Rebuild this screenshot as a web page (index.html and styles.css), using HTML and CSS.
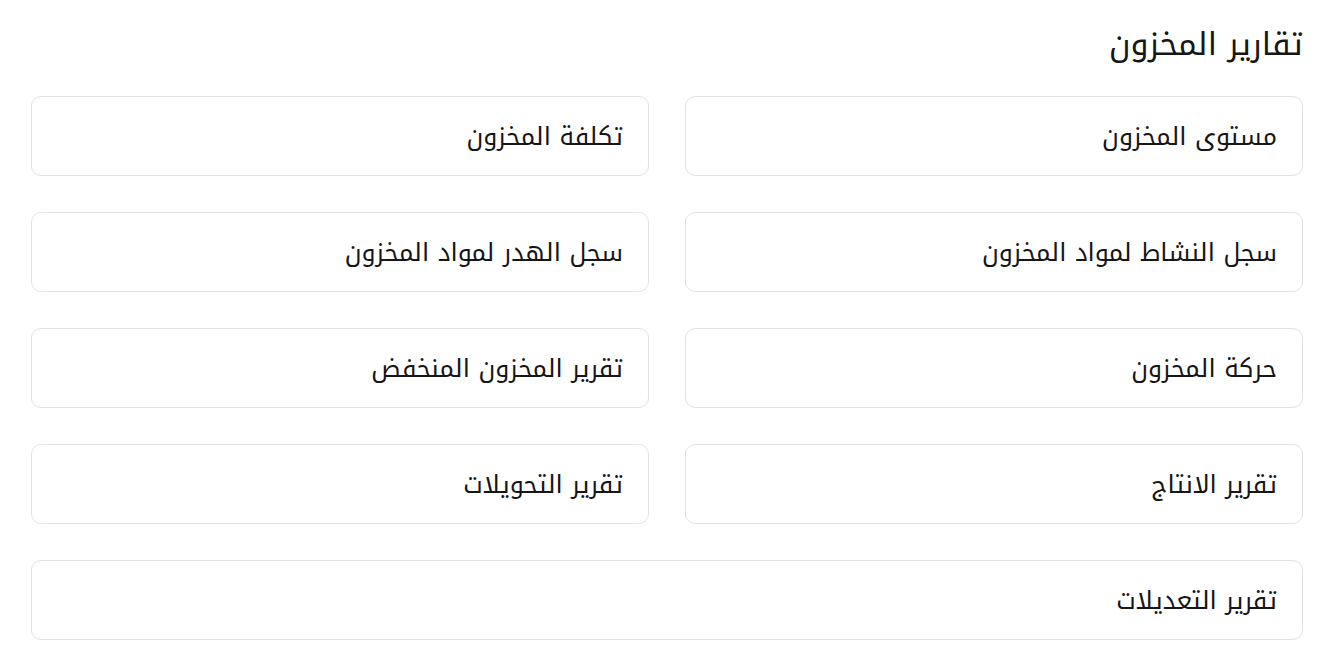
FILE: index.html
```html
<!DOCTYPE html>
<html lang="ar" dir="rtl">
<head>
    <meta charset="UTF-8">
    <title>تقارير المخزون</title>
    <link rel="stylesheet" href="styles.css">
</head>
<body>
    <div class="page">
        <h1 class="title">تقارير المخزون</h1>
        <div class="reports">
            <a class="report" href="#">مستوى المخزون</a>
            <a class="report" href="#">تكلفة المخزون</a>
            <a class="report" href="#">سجل النشاط لمواد المخزون</a>
            <a class="report" href="#">سجل الهدر لمواد المخزون</a>
            <a class="report" href="#">حركة المخزون</a>
            <a class="report" href="#">تقرير المخزون المنخفض</a>
            <a class="report" href="#">تقرير الانتاج</a>
            <a class="report" href="#">تقرير التحويلات</a>
            <a class="report wide" href="#">تقرير التعديلات</a>
        </div>
    </div>
</body>
</html>
```

FILE: styles.css
```css
body{
    margin: 0;
    background: #fff;
    font-family: "Noto Kufi Arabic", "DejaVu Sans", sans-serif;
    color: #161616;
}

.page{
    padding: 24px 25px 0 31px;
}

.title{
    margin: 0 0 30px;
    font-size: 32px;
    font-weight: normal;
    line-height: 42px;
}

.reports{
    display: grid;
    grid-template-columns: 1fr 1fr;
    column-gap: 36px;
    row-gap: 36px;
}

.report{
    display: flex;
    align-items: center;
    height: 80px;
    box-sizing: border-box;
    padding: 0 25px;
    border: 1px solid #e3e3e3;
    border-radius: 10px;
    font-size: 25px;
    line-height: 1;
    color: #161616;
    text-decoration: none;
}

.wide{
    grid-column: 1 / -1;
}
```
